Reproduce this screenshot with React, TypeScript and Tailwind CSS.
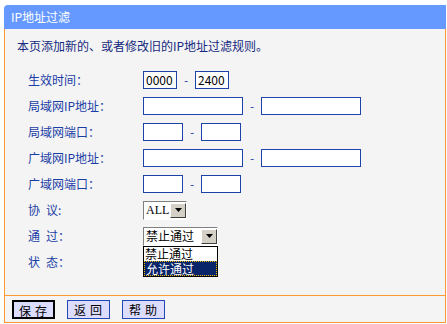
import React from 'react';

const font = { fontFamily: '"SimSun", "Noto Sans CJK SC", "Liberation Sans", sans-serif' };

const TextBox: React.FC<{ w: string; value?: string }> = ({ w, value }) => (
  <div className={`${w} h-[18px] border border-[#1d43ab] bg-white text-[12px] leading-[16px] pl-[2px] text-black`}>
    {value}
  </div>
);

const Dash = () => <span className="w-[18px] text-center text-[#1d43ab] text-[12px]">-</span>;

const ComboArrow = () => (
  <div className="w-[16px] h-[15px] bg-[#d4d0c8] border border-t-white border-l-white border-r-[#404040] border-b-[#404040] flex items-center justify-center">
    <svg width="7" height="4" viewBox="0 0 7 4">
      <path d="M0 0h7L3.5 4z" fill="#000" />
    </svg>
  </div>
);

const Row: React.FC<{ label: React.ReactNode; children?: React.ReactNode }> = ({ label, children }) => (
  <div className="flex items-center h-[26px]">
    <div className="w-[115px] text-[12px] text-[#1a3da6] flex">{label}</div>
    <div className="flex items-center">{children}</div>
  </div>
);

// two-character labels are spread out like "协  议:"
const Spread: React.FC<{ a: string; b: string }> = ({ a, b }) => (
  <>
    <span className="mr-[6px]">{a}</span>
    <span>{b}</span>
  </>
);

const App: React.FC = () => {
  return (
    <div className="w-[447px] h-[324px] bg-white pt-[5px] pl-[4px]" style={font}>
      <div className="w-[442px] h-[24px] bg-[#6699ff] rounded-tl-[4px] flex items-center pl-[7px] text-white text-[12px]">
        IP地址过滤
      </div>
      <div className="w-[442px] h-[294px] bg-[#f4f4f4] border-l border-r border-b border-[#ff9933] flex flex-col">
        <div className="pl-[12px] pt-[8px] h-[38px] text-[12px] text-[#152a80]">
          本页添加新的、或者修改旧的IP地址过滤规则。
        </div>
        <div className="pl-[23px] flex flex-col">
          <Row label="生效时间：">
            <TextBox w="w-[34px]" value="0000" />
            <Dash />
            <TextBox w="w-[34px]" value="2400" />
          </Row>
          <Row label="局域网IP地址：">
            <TextBox w="w-[100px]" />
            <Dash />
            <TextBox w="w-[100px]" />
          </Row>
          <Row label="局域网端口：">
            <TextBox w="w-[40px]" />
            <Dash />
            <TextBox w="w-[40px]" />
          </Row>
          <Row label="广域网IP地址：">
            <TextBox w="w-[100px]" />
            <Dash />
            <TextBox w="w-[100px]" />
          </Row>
          <Row label="广域网端口：">
            <TextBox w="w-[40px]" />
            <Dash />
            <TextBox w="w-[40px]" />
          </Row>
          <Row label={<Spread a="协" b="议:" />}>
            <div className="w-[44px] h-[19px] bg-white border border-t-[#808080] border-l-[#808080] border-r-white border-b-white flex items-center pl-[2px]">
              <span className="flex-1 text-[12px] text-black" style={{ fontFamily: '"Liberation Serif", serif' }}>ALL</span>
              <ComboArrow />
            </div>
          </Row>
          <Row label={<Spread a="通" b="过：" />}>
            <div className="relative">
              <div className="w-[75px] h-[19px] bg-white border border-t-[#808080] border-l-[#808080] border-r-white border-b-white flex items-center pl-[2px]">
                <span className="flex-1 text-[12px] text-black">禁止通过</span>
                <ComboArrow />
              </div>
              <div className="absolute left-0 top-[19px] w-[75px] bg-white border border-black text-[12px] z-10">
                <div className="h-[14px] leading-[14px] pl-[1px] text-black">禁止通过</div>
                <div className="h-[15px] leading-[13px] pl-[1px] text-white bg-[#0a246a] border border-dotted border-[#f0c000]">允许通过</div>
              </div>
            </div>
          </Row>
          <Row label={<Spread a="状" b="态：" />} />
        </div>
        <div className="mt-auto h-[27px] border-t border-[#ff9933] flex items-center pl-[7px] gap-[12px]">
          <button className="w-[43px] h-[19px] bg-[#dcdcff] border-2 border-black text-[12px] text-black tracking-[4px] pl-[3px]">保存</button>
          <button className="w-[43px] h-[19px] bg-[#dcdcff] border border-[#2148b4] text-[12px] text-black tracking-[4px] pl-[3px]">返回</button>
          <button className="w-[43px] h-[19px] bg-[#dcdcff] border border-[#2148b4] text-[12px] text-black tracking-[4px] pl-[3px]">帮助</button>
        </div>
      </div>
    </div>
  );
};

export default App;
